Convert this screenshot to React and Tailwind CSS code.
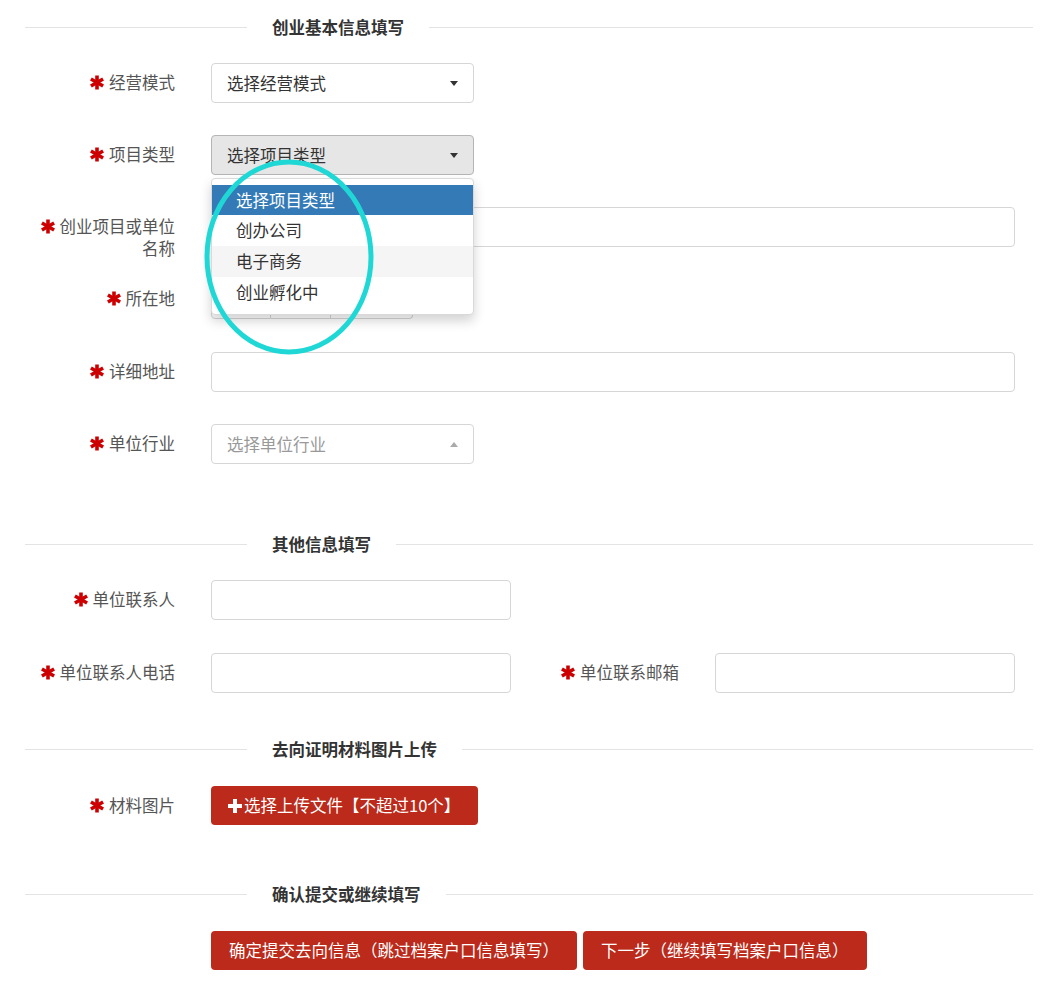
import React from 'react';

const font = { fontFamily: '"Noto Sans CJK SC", "Noto Sans", sans-serif' };

function Star() {
    return (
        <svg width="14" height="15" viewBox="0 0 14 15" className="inline-block align-[-1px] mr-[5px]">
            <g stroke="#cc0000" strokeWidth="3.6" strokeLinecap="butt">
                <line x1="7" y1="0.5" x2="7" y2="14.5" />
                <line x1="0.9" y1="4" x2="13.1" y2="11" />
                <line x1="0.9" y1="11" x2="13.1" y2="4" />
            </g>
        </svg>
    );
}

function Legend({ title, className = '' }) {
    return (
        <div className={`flex items-center h-[24px] ${className}`}>
            <div className="w-[222px] h-px bg-[#e3e3e3]" />
            <span className="px-[25px] text-[16.5px] font-bold text-[#333] leading-[24px]">{title}</span>
            <div className="flex-1 h-px bg-[#e3e3e3]" />
        </div>
    );
}

function Label({ children }) {
    return (
        <div className="w-[150px] shrink-0 text-right pt-[8px] leading-[22px] text-[16.5px] text-[#555]">
            <Star />
            {children}
        </div>
    );
}

function Caret({ up }) {
    return up ? (
        <span className="w-0 h-0 border-x-[4px] border-x-transparent border-b-[5px] border-b-[#aaa]" />
    ) : (
        <span className="w-0 h-0 border-x-[4px] border-x-transparent border-t-[5px] border-t-[#333]" />
    );
}

function Select({ text, placeholder, active, up, children }) {
    return (
        <div className="relative w-[263px]">
            <div
                className={`h-[40px] flex items-center justify-between pl-[15px] pr-[15px] rounded-[4px] border text-[16.5px] ${
                    active ? 'bg-[#e6e6e6] border-[#b5b5b5]' : 'bg-white border-[#d6d6d6]'
                } ${placeholder ? 'text-[#999]' : 'text-[#333]'}`}
            >
                <span>{text}</span>
                <Caret up={up} />
            </div>
            {children}
        </div>
    );
}

function Input({ className = '' }) {
    return <div className={`h-[40px] rounded-[4px] border border-[#d6d6d6] bg-white ${className}`} />;
}

function Row({ label, children, className = '' }) {
    return (
        <div className={`flex items-start h-[40px] gap-[36px] ${className}`}>
            <Label>{label}</Label>
            {children}
        </div>
    );
}

const btn = 'h-[39px] px-[18px] rounded-[4px] bg-[#bb2a1b] text-white text-[16.5px] flex items-center';

export default function App() {
    return (
        <div className="relative w-[1051px] min-h-[982px] bg-white pl-[25px] pr-[18px] pt-[15px]" style={font}>
            <Legend title="创业基本信息填写" />

            <div className="pr-[18px]">
                <Row label="经营模式" className="mt-[24px]">
                    <Select text="选择经营模式" />
                </Row>

                <Row label="项目类型" className="mt-[32px] relative z-20">
                    <Select text="选择项目类型" active>
                        <div className="absolute left-0 top-full mt-[3px] w-full bg-white border border-[#d9d9d9] rounded-[4px] shadow-[0_6px_12px_rgba(0,0,0,0.175)] py-[6px] text-[16.5px] text-[#333]">
                            <div className="h-[30px] leading-[30px] pl-[24px] bg-[#337ab7] text-white">选择项目类型</div>
                            <div className="h-[31px] leading-[31px] pl-[24px]">创办公司</div>
                            <div className="h-[31px] leading-[31px] pl-[24px] bg-[#f5f5f5]">电子商务</div>
                            <div className="h-[31px] leading-[31px] pl-[24px]">创业孵化中</div>
                        </div>
                    </Select>
                </Row>

                <Row label="创业项目或单位名称" className="mt-[32px]">
                    <Input className="flex-1" />
                </Row>

                <Row label="所在地" className="mt-[32px]">
                    <div className="flex">
                        <div className="w-[60px] h-[40px] border border-[#d6d6d6] rounded-l-[4px]" />
                        <div className="w-[60px] h-[40px] border-y border-r border-[#d6d6d6]" />
                        <div className="w-[82px] h-[40px] border-y border-r border-[#d6d6d6] rounded-r-[4px]" />
                    </div>
                </Row>

                <Row label="详细地址" className="mt-[33px]">
                    <Input className="flex-1" />
                </Row>

                <Row label="单位行业" className="mt-[32px]">
                    <Select text="选择单位行业" placeholder up />
                </Row>
            </div>

            <Legend title="其他信息填写" className="mt-[68px]" />

            <Row label="单位联系人" className="mt-[24px]">
                <Input className="w-[300px]" />
            </Row>

            <div className="flex items-start mt-[33px]">
                <Row label="单位联系人电话">
                    <Input className="w-[300px]" />
                </Row>
                <Row label="单位联系邮箱" className="ml-[18px]">
                    <Input className="w-[300px]" />
                </Row>
            </div>

            <Legend title="去向证明材料图片上传" className="mt-[44px]" />

            <Row label="材料图片" className="mt-[25px]">
                <button className={`${btn} w-[267px] pl-[17px]`}>
                    <svg width="14" height="14" viewBox="0 0 14 14" className="mr-[2px]">
                        <path d="M5 0h4v5h5v4H9v5H5V9H0V5h5z" fill="white" />
                    </svg>
                    选择上传文件【不超过10个】
                </button>
            </Row>

            <Legend title="确认提交或继续填写" className="mt-[56px]" />

            <div className="flex gap-[6px] mt-[25px] pl-[186px]">
                <button className={btn}>确定提交去向信息（跳过档案户口信息填写）</button>
                <button className={btn}>下一步（继续填写档案户口信息）</button>
            </div>

            <svg
                className="absolute left-[203px] top-[158px] z-30 pointer-events-none"
                width="172"
                height="198"
                viewBox="0 0 172 198"
            >
                <ellipse cx="86" cy="99" rx="82" ry="95" fill="none" stroke="#1fd8d6" strokeWidth="5" />
            </svg>
        </div>
    );
}
